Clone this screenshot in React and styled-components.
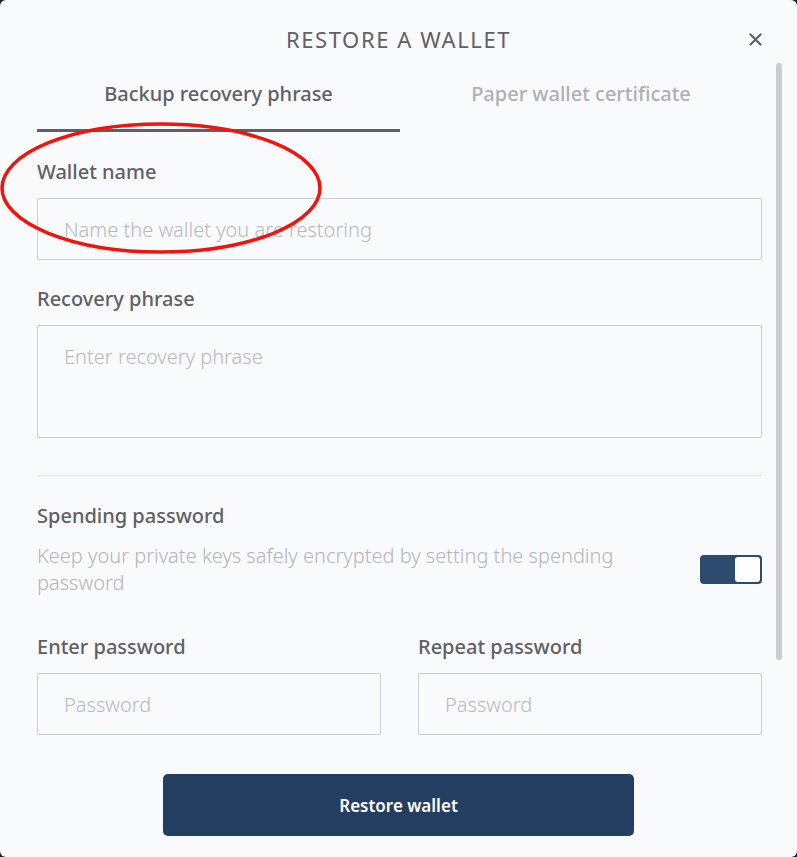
import styled, { createGlobalStyle } from "styled-components";

const GlobalStyle = createGlobalStyle`
  * {
    box-sizing: border-box;
  }

  html,
  body {
    margin: 0;
    padding: 0;
    background-color: #1b2230;
  }

  body {
    font-family: "Noto Sans", "Open Sans", sans-serif;
    color: #5e6066;
  }
`;

export default function App() {
  return (
    <>
      <GlobalStyle />
      <Dialog>
        <Header>
          <h1>Restore a wallet</h1>
          <CloseButton aria-label="close">
            <svg width="13" height="13" viewBox="0 0 13 13">
              <path
                d="M1.5 1.5 L11.5 11.5 M11.5 1.5 L1.5 11.5"
                stroke="#5e6066"
                strokeWidth="2.2"
                strokeLinecap="round"
              />
            </svg>
          </CloseButton>
        </Header>
        <Body>
          <Content>
            <Tabs>
              <Tab $active>Backup recovery phrase</Tab>
              <Tab>Paper wallet certificate</Tab>
            </Tabs>

            <Field>
              <Label>Wallet name</Label>
              <Input placeholder="Name the wallet you are restoring" />
            </Field>

            <Field $gap={27}>
              <Label>Recovery phrase</Label>
              <TextArea placeholder="Enter recovery phrase" />
            </Field>

            <Divider />

            <Label>Spending password</Label>
            <SwitchRow>
              <Hint>
                Keep your private keys safely encrypted by setting the spending
                password
              </Hint>
              <Switch $on>
                <span />
              </Switch>
            </SwitchRow>

            <PasswordGrid>
              <Field>
                <Label>Enter password</Label>
                <Input type="password" placeholder="Password" />
              </Field>
              <Field>
                <Label>Repeat password</Label>
                <Input type="password" placeholder="Password" />
              </Field>
            </PasswordGrid>
          </Content>
          <ScrollTrack>
            <ScrollThumb />
          </ScrollTrack>
        </Body>
        <Footer>
          <PrimaryButton>Restore wallet</PrimaryButton>
        </Footer>
        <Annotation viewBox="0 0 330 140">
          <ellipse
            cx="161"
            cy="66"
            rx="159"
            ry="64"
            fill="none"
            stroke="#f0140e"
            strokeWidth="3.5"
          />
        </Annotation>
      </Dialog>
    </>
  );
}

const Dialog = styled.div`
  position: relative;
  width: 797px;
  height: 857px;
  background-color: #f9fafc;
  border-radius: 6px;
  overflow: hidden;
  display: flex;
  flex-direction: column;
`;

const Header = styled.header`
  height: 63px;
  display: flex;
  align-items: flex-start;
  justify-content: center;
  position: relative;
  padding-top: 24px;

  h1 {
    margin: 0;
    font-size: 22px;
    line-height: 30px;
    font-weight: 400;
    letter-spacing: 1.6px;
    text-transform: uppercase;
    color: #5e6066;
  }
`;

const CloseButton = styled.button`
  position: absolute;
  right: 35px;
  top: 33px;
  width: 13px;
  height: 13px;
  padding: 0;
  border: none;
  background: none;
  display: flex;
`;

const Body = styled.div`
  display: flex;
  height: 692px;
`;

const Content = styled.div`
  width: 762px;
  padding-left: 37px;
  display: flex;
  flex-direction: column;
`;

const ScrollTrack = styled.div`
  margin-left: 14px;
  width: 6px;
`;

const ScrollThumb = styled.div`
  width: 6px;
  height: 597px;
  border-radius: 3px;
  background-color: #c9cbce;
`;

const Tabs = styled.div`
  display: grid;
  grid-template-columns: 363px 1fr;
  margin-bottom: 28px;
`;

const Tab = styled.div`
  height: 69px;
  padding-bottom: 6px;
  display: flex;
  align-items: center;
  justify-content: center;
  font-size: 20px;
  font-weight: 500;
  color: ${(p) => (p.$active ? "#5e6066" : "#aeb0b4")};
  border-bottom: 3px solid ${(p) => (p.$active ? "#5e6066" : "transparent")};
`;

const Field = styled.div`
  display: flex;
  flex-direction: column;
  margin-bottom: ${(p) => p.$gap ?? 27}px;
`;

const Label = styled.label`
  font-size: 20px;
  font-weight: 500;
  line-height: 24px;
  color: #5e6066;
  margin-bottom: 14px;
`;

const Input = styled.input`
  height: 62px;
  width: 100%;
  padding: 0 26px;
  border: 1px solid #c9cfd8;
  border-radius: 2px;
  background-color: #f9fafc;
  font-family: inherit;
  font-size: 20px;
  font-weight: 300;
  color: #5e6066;
  outline: none;

  &::placeholder {
    color: #b7b9bd;
    font-weight: 300;
  }
`;

const TextArea = styled.textarea`
  height: 113px;
  width: 100%;
  padding: 17px 26px;
  border: 1px solid #c9cfd8;
  border-radius: 2px;
  background-color: #f9fafc;
  font-family: inherit;
  font-size: 20px;
  font-weight: 300;
  line-height: 28px;
  resize: none;
  outline: none;

  &::placeholder {
    color: #b7b9bd;
  }
`;

const Divider = styled.hr`
  margin: 10px 0 28px;
  border: none;
  border-top: 1px solid #e3e5e9;
  width: 100%;
`;

const SwitchRow = styled.div`
  display: flex;
  align-items: center;
  justify-content: space-between;
  margin-bottom: 39px;
`;

const Hint = styled.p`
  margin: 0;
  width: 620px;
  font-size: 20px;
  font-weight: 300;
  line-height: 27px;
  color: #b3b5b9;
`;

const Switch = styled.div`
  width: 62px;
  height: 29px;
  border-radius: 4px;
  background-color: ${(p) => (p.$on ? "#2d4a6f" : "#c9cfd8")};
  padding: 2px;
  display: flex;
  justify-content: ${(p) => (p.$on ? "flex-end" : "flex-start")};

  span {
    width: 25px;
    height: 25px;
    border-radius: 3px;
    background-color: #ffffff;
  }
`;

const PasswordGrid = styled.div`
  display: grid;
  grid-template-columns: 344px 344px;
  gap: 37px;
`;

const Footer = styled.footer`
  display: flex;
  justify-content: center;
  padding-top: 19px;
`;

const PrimaryButton = styled.button`
  width: 471px;
  height: 62px;
  border: none;
  border-radius: 5px;
  background-color: #243e62;
  color: #ffffff;
  font-family: inherit;
  font-size: 17px;
  font-weight: 600;
`;

const Annotation = styled.svg`
  position: absolute;
  left: 0;
  top: 122px;
  width: 330px;
  height: 140px;
  pointer-events: none;
`;
